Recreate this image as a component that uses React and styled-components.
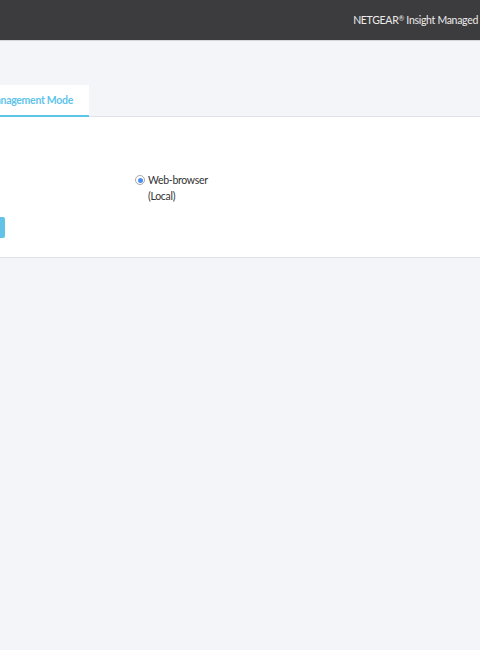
import React from "react";
import styled, { createGlobalStyle } from "styled-components";

const GlobalStyle = createGlobalStyle`
  html, body {
    margin: 0;
    padding: 0;
    background: #f4f5f9;
    font-family: Lato, "Open Sans", sans-serif;
    overflow: hidden;
  }
`;

const Page = styled.div`
  width: 480px;
  height: 650px;
  overflow: hidden;
  background: #f4f5f9;
`;

const TopBar = styled.header`
  height: 40px;
  background: #3c3b3d;
  border-bottom: 1px solid #d4d6db;
  display: flex;
  align-items: center;
  justify-content: flex-end;
  padding-right: 2px;
  overflow: hidden;
`;

const Brand = styled.span`
  color: #ececec;
  font-size: 10.5px;
  white-space: nowrap;
  letter-spacing: -0.3px;

  sup {
    font-size: 7px;
    vertical-align: 3px;
  }
`;

const TabStrip = styled.div`
  margin-top: 44px;
  display: flex;
  border-bottom: 1px solid #dfe2e8;
`;

const Tab = styled.div`
  margin-left: ${(p) => p.$offset || 0}px;
  height: 30px;
  padding: 0 16px;
  display: flex;
  align-items: center;
  background: ${(p) => (p.$active ? "#ffffff" : "transparent")};
  border-bottom: 2px solid ${(p) => (p.$active ? "#5fc4ea" : "transparent")};
  margin-bottom: -1px;
  color: #5fc4ea;
  font-size: 10.5px;
  letter-spacing: -0.3px;
  font-weight: 700;
  white-space: nowrap;
`;

const Panel = styled.section`
  background: #ffffff;
  border-bottom: 1px solid #dfe2e8;
  padding: 55px 0 19px;
`;

const OptionRow = styled.div`
  display: flex;
  align-items: flex-start;
  padding-left: 135px;
`;

const Radio = styled.span`
  width: 10px;
  height: 10px;
  margin-top: 3px;
  border-radius: 50%;
  border: 1px solid #a8a8a8;
  box-sizing: border-box;
  background: #fff;
  display: flex;
  align-items: center;
  justify-content: center;
  flex-shrink: 0;

  &::after {
    content: "";
    width: 5px;
    height: 5px;
    border-radius: 50%;
    background: #4b8ff0;
  }
`;

const OptionLabel = styled.span`
  margin-left: 3px;
  font-size: 10.5px;
  letter-spacing: -0.3px;
  line-height: 16px;
  color: #333;
`;

const Actions = styled.div`
  margin-top: 13px;
  display: flex;
`;

const Button = styled.button`
  margin-left: -60px;
  width: 65px;
  height: 21px;
  border: none;
  border-radius: 2px;
  background: #63c3e6;
`;

export default function App() {
  return (
    <Page>
      <GlobalStyle />
      <TopBar>
        <Brand>
          NETGEAR<sup>®</sup> Insight Managed
        </Brand>
      </TopBar>
      <TabStrip>
        <Tab $active $offset={-30}>Management Mode</Tab>
      </TabStrip>
      <Panel>
        <OptionRow>
          <Radio />
          <OptionLabel>
            Web-browser
            <br />
            (Local)
          </OptionLabel>
        </OptionRow>
        <Actions>
          <Button aria-label="Apply" />
        </Actions>
      </Panel>
    </Page>
  );
}
